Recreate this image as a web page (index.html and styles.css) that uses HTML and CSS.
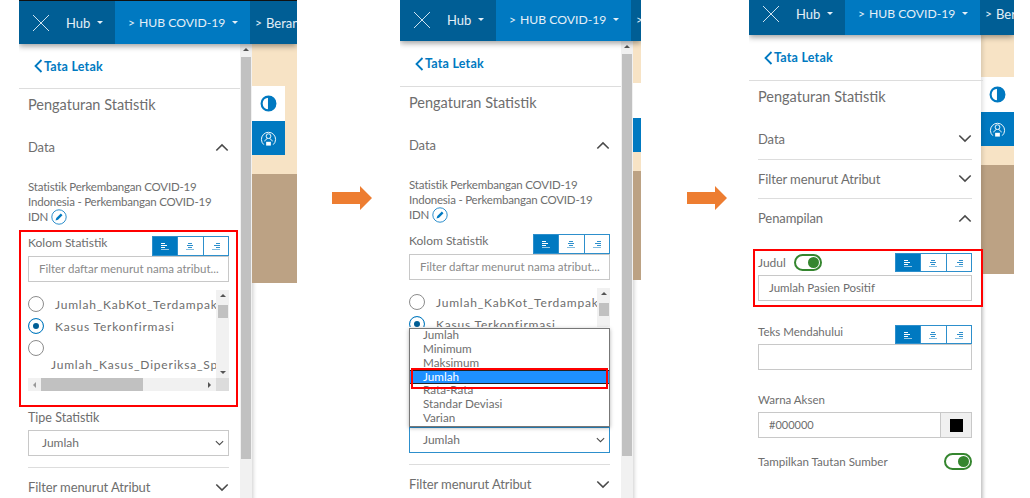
FILE: index.html
```html
<!DOCTYPE html>
<html lang="en">
<head>
  <meta charset="UTF-8">
  <title>Pengaturan Statistik</title>
  <link rel="stylesheet" href="styles.css">
</head>
<body>

<svg class="defs" width="0" height="0">
  <symbol id="logo" viewBox="0 0 18 18"><path d="M1 1 17 17M17 1 1 17" fill="none" stroke="#cfe3f0" stroke-width="1"/></symbol>
  <symbol id="up" viewBox="0 0 16 10"><path d="M1.500 8.500 8 2l6.500 6.500" fill="none" stroke="#4a4a4a" stroke-width="1.800"/></symbol>
  <symbol id="down" viewBox="0 0 16 10"><path d="M1.500 1.500 8 8l6.500-6.500" fill="none" stroke="#4a4a4a" stroke-width="1.800"/></symbol>
  <symbol id="back" viewBox="0 0 9 14"><path d="M7.500 1 1.500 7l6 6" fill="none" stroke="#0079c1" stroke-width="1.800"/></symbol>
  <symbol id="contrast" viewBox="0 0 16 16"><circle cx="8" cy="8" r="6.500" fill="#fff" stroke="#0079c1" stroke-width="2"/><path d="M8 1.500a6.500 6.500 0 0 1 0 13z" fill="#0079c1" stroke="#0079c1"/></symbol>
  <symbol id="user" viewBox="0 0 18 18"><path d="M4 15.500a7.500 7.500 0 1 1 10 0" fill="none" stroke="#fff"/><circle cx="9" cy="6.500" r="2.500" fill="none" stroke="#fff"/><path d="M5 12c.500-2 2-2.500 3-3M13 12c-.500-2-2-2.500-3-3" fill="none" stroke="#fff"/><rect x="6.500" y="12.500" width="5" height="4" fill="#fff"/></symbol>
  <symbol id="pen" viewBox="0 0 16 16"><circle cx="8" cy="8" r="7.200" fill="#fff" stroke="#2d8fcc"/><path d="M4.500 11.500l.8-2.400 4.500-4.500 1.700 1.700-4.500 4.500z" fill="#0079c1"/></symbol>
  <symbol id="al" viewBox="0 0 10 8"><path d="M1 1.500h4M1 3.500h6M1 5.500h4" stroke="currentColor" fill="none"/><path d="M1 7.500h8" stroke="currentColor" opacity=".6" fill="none"/></symbol>
  <symbol id="ac" viewBox="0 0 10 8"><path d="M3 1.500h4M2 3.500h6M3 5.500h4" stroke="currentColor" fill="none"/><path d="M1 7.500h8" stroke="currentColor" opacity=".6" fill="none"/></symbol>
  <symbol id="ar" viewBox="0 0 10 8"><path d="M5 1.500h4M3 3.500h6M5 5.500h4" stroke="currentColor" fill="none"/><path d="M1 7.500h8" stroke="currentColor" opacity=".6" fill="none"/></symbol>
  <symbol id="arrow" viewBox="0 0 40 24"><path d="M0 6h28V0l12 12-12 12v-6H0z" fill="#ed7d31"/></symbol>
</svg>

<div class="page">

  <!-- layar 1 -->
  <div class="screen screen-one">
    <div class="topbar">
      <div class="crumb crumb-home"><svg class="logo"><use href="#logo"/></svg><span>Hub</span><i class="caret"></i></div>
      <div class="crumb crumb-site"><span class="sep">&gt;</span><span>HUB COVID-19</span><i class="caret"></i></div>
      <div class="crumb crumb-page"><span class="sep">&gt;</span><span>Beranda</span></div>
    </div>
    <div class="body">
      <div class="panel">
        <a class="back"><svg><use href="#back"/></svg>Tata Letak</a>
        <h2 class="title">Pengaturan Statistik</h2>
        <div class="acc-row"><span>Data</span><svg><use href="#up"/></svg></div>
        <p class="desc">Statistik Perkembangan COVID-19 Indonesia - Perkembangan COVID-19 IDN <svg class="pen"><use href="#pen"/></svg></p>
        <div class="box box-red">
          <div class="label-row"><span>Kolom Statistik</span>
            <div class="seg"><b class="on"><svg><use href="#al"/></svg></b><b><svg><use href="#ac"/></svg></b><b><svg><use href="#ar"/></svg></b></div>
          </div>
          <div class="input placeholder">Filter daftar menurut nama atribut...</div>
          <div class="radios">
            <div class="radio-list">
              <div class="radio-row"><i class="radio"></i><span>Jumlah_KabKot_Terdampak</span></div>
              <div class="radio-row"><i class="radio checked"></i><span>Kasus Terkonfirmasi</span></div>
              <div class="radio-row radio-wrap"><i class="radio"></i><span>Jumlah_Kasus_Diperiksa_Spesimen</span></div>
            </div>
            <div class="vbar"><i class="tri-up"></i><u></u><i class="tri-down"></i></div>
            <div class="hbar"><i class="tri-left"></i><u></u><i class="tri-right"></i></div>
            <div class="corner"></div>
          </div>
        </div>
        <div class="type-label">Tipe Statistik</div>
        <div class="input select"><span>Jumlah</span><svg><use href="#down"/></svg></div>
        <div class="acc-row acc-line"><span>Filter menurut Atribut</span><svg><use href="#down"/></svg></div>
      </div>
      <div class="scrollbar"><i class="tri-up"></i><u></u></div>
      <div class="map">
        <div class="land">
          <div class="tool tool-on"><svg><use href="#contrast"/></svg></div>
          <div class="tool"><svg><use href="#user"/></svg></div>
        </div>
        <div class="ground"></div>
      </div>
    </div>
  </div>

  <svg class="arrow arrow-one"><use href="#arrow"/></svg>

  <!-- layar 2 -->
  <div class="screen screen-two">
    <div class="topbar">
      <div class="crumb crumb-home"><svg class="logo"><use href="#logo"/></svg><span>Hub</span><i class="caret"></i></div>
      <div class="crumb crumb-site"><span class="sep">&gt;</span><span>HUB COVID-19</span><i class="caret"></i></div>
      <div class="crumb crumb-page"><span class="sep">&gt;</span><span>Beranda</span></div>
    </div>
    <div class="body">
      <div class="panel">
        <a class="back"><svg><use href="#back"/></svg>Tata Letak</a>
        <h2 class="title">Pengaturan Statistik</h2>
        <div class="acc-row"><span>Data</span><svg><use href="#up"/></svg></div>
        <p class="desc">Statistik Perkembangan COVID-19 Indonesia - Perkembangan COVID-19 IDN <svg class="pen"><use href="#pen"/></svg></p>
        <div class="box">
          <div class="label-row"><span>Kolom Statistik</span>
            <div class="seg"><b class="on"><svg><use href="#al"/></svg></b><b><svg><use href="#ac"/></svg></b><b><svg><use href="#ar"/></svg></b></div>
          </div>
          <div class="input placeholder">Filter daftar menurut nama atribut...</div>
          <div class="radios radios-short">
            <div class="radio-list">
              <div class="radio-row"><i class="radio"></i><span>Jumlah_KabKot_Terdampak</span></div>
              <div class="radio-row"><i class="radio checked"></i><span>Kasus Terkonfirmasi</span></div>
            </div>
            <div class="vbar"><i class="tri-up"></i><u></u></div>
          </div>
        </div>
        <div class="select-wrap">
          <ul class="dropdown">
            <li>Jumlah</li>
            <li>Minimum</li>
            <li>Maksimum</li>
            <li class="picked">Jumlah</li>
            <li>Rata-Rata</li>
            <li>Standar Deviasi</li>
            <li>Varian</li>
          </ul>
          <div class="input select select-focus"><span>Jumlah</span><svg><use href="#down"/></svg></div>
        </div>
        <div class="acc-row acc-line"><span>Filter menurut Atribut</span><svg><use href="#down"/></svg></div>
      </div>
      <div class="scrollbar"><i class="tri-up"></i><u></u></div>
      <div class="map">
        <div class="land">
          <div class="tool tool-on"><svg><use href="#contrast"/></svg></div>
          <div class="tool"><svg><use href="#user"/></svg></div>
        </div>
        <div class="ground"></div>
      </div>
    </div>
  </div>

  <svg class="arrow arrow-two"><use href="#arrow"/></svg>

  <!-- layar 3 -->
  <div class="screen screen-three">
    <div class="topbar">
      <div class="crumb crumb-home"><svg class="logo"><use href="#logo"/></svg><span>Hub</span><i class="caret"></i></div>
      <div class="crumb crumb-site"><span class="sep">&gt;</span><span>HUB COVID-19</span><i class="caret"></i></div>
      <div class="crumb crumb-page"><span class="sep">&gt;</span><span>Beranda</span></div>
    </div>
    <div class="body">
      <div class="panel panel-wide">
        <a class="back"><svg><use href="#back"/></svg>Tata Letak</a>
        <h2 class="title">Pengaturan Statistik</h2>
        <div class="acc-row acc-first"><span>Data</span><svg><use href="#down"/></svg></div>
        <div class="acc-row acc-line-bottom"><span>Filter menurut Atribut</span><svg><use href="#down"/></svg></div>
        <div class="acc-row"><span>Penampilan</span><svg><use href="#up"/></svg></div>
        <div class="box-title">
          <div class="label-row label-tall"><span>Judul</span><i class="toggle toggle-title"></i>
            <div class="seg"><b class="on"><svg><use href="#al"/></svg></b><b><svg><use href="#ac"/></svg></b><b><svg><use href="#ar"/></svg></b></div>
          </div>
          <div class="input value">Jumlah Pasien Positif</div>
        </div>
        <div class="label-row label-lead"><span>Teks Mendahului</span>
          <div class="seg"><b class="on"><svg><use href="#al"/></svg></b><b><svg><use href="#ac"/></svg></b><b><svg><use href="#ar"/></svg></b></div>
        </div>
        <div class="input"></div>
        <div class="accent-label">Warna Aksen</div>
        <div class="color-row">
          <div class="input value color-value">#000000</div>
          <div class="swatch"><i></i></div>
        </div>
        <div class="switch-row"><span>Tampilkan Tautan Sumber</span><i class="toggle"></i></div>
      </div>
      <div class="map">
        <div class="land">
          <div class="tool tool-on"><svg><use href="#contrast"/></svg></div>
          <div class="tool"><svg><use href="#user"/></svg></div>
        </div>
        <div class="ground"></div>
      </div>
    </div>
  </div>

</div>

</body>
</html>
```

FILE: styles.css
```css
* {
  box-sizing: border-box;
}

html, body {
  height: 100%;
  margin: 0;
  overflow: hidden;
  background: #fff;
}

body {
  font-family: Lato, "Open Sans", sans-serif;
  font-size: 13px;
  color: #6e6e6e;
}

.defs {
  position: absolute;
}

.page {
  display: flex;
  align-items: flex-start;
  width: 1030px;
  height: 498px;
  padding-left: 19px;
  overflow: hidden;
}

/* one screen of the editor */
.screen {
  display: flex;
  flex-direction: column;
  flex: none;
  height: 520px;
  overflow: hidden;
}

.screen-one {
  width: 278px;
  border-top: 1px solid #111;
}

.screen-two {
  width: 241px;
  margin-top: -2px;
}

.screen-three {
  width: 265px;
  margin-top: -8px;
}

.arrow {
  flex: none;
  width: 40px;
  height: 24px;
  margin-top: 186px;
}

.arrow-one {
  margin-left: 35px;
  margin-right: 28px;
}

.arrow-two {
  margin-left: 46px;
  margin-right: 22px;
}

/* top bar */
.topbar {
  display: flex;
  flex: none;
  height: 43px;
  position: relative;
  z-index: 2;
  color: #e4eff7;
  font-size: 13px;
  white-space: nowrap;
  box-shadow: 0 2px 6px rgba(0, 0, 0, 0.4);
}

.crumb {
  display: flex;
  align-items: center;
  flex: none;
}

.crumb-home {
  width: 96px;
  padding-left: 13px;
  background: #005e95;
}

.crumb-site {
  width: 135px;
  padding-left: 13px;
  background: #0079c1;
  font-size: 12.200px;
}

.crumb-page {
  flex: 1;
  min-width: 0;
  padding-left: 5px;
  background: #005e95;
  overflow: hidden;
}

.logo {
  width: 18px;
  height: 18px;
  margin-right: 16px;
}

.sep {
  flex: none;
  width: 11px;
  font-size: 12px;
}

.caret {
  width: 0;
  height: 0;
  margin-left: 7px;
  border-top: 3px solid #e4eff7;
  border-left: 3px solid transparent;
  border-right: 3px solid transparent;
}

.body {
  display: flex;
  flex: 1;
}

/* left panel */
.panel {
  flex: none;
  width: 221px;
  padding: 0 11px 0 9px;
  position: relative;
  z-index: 1;
}

.panel-wide {
  width: 232px;
  padding-right: 9px;
  box-shadow: 2px 0 4px rgba(0, 0, 0, 0.12);
}

.back {
  display: flex;
  align-items: center;
  height: 45px;
  margin: 0 -11px 0 -9px;
  padding-left: 15px;
  border-bottom: 1px solid #ddd;
  color: #0079c1;
  font-size: 12.500px;
  font-weight: 700;
  letter-spacing: 0.2px;
}

.back svg {
  width: 9px;
  height: 14px;
  margin-right: 1px;
}

.screen-two .back, .screen-three .back {
  height: 46px;
}

.title {
  height: 39px;
  margin: 0;
  padding-top: 7px;
  font-size: 14.500px;
  font-weight: 400;
  line-height: 18px;
}

.screen-three .title {
  height: 38px;
}

.acc-row {
  display: flex;
  justify-content: space-between;
  align-items: center;
  height: 39px;
  padding-bottom: 1px;
  letter-spacing: -0.1px;
}

.acc-row svg {
  width: 14px;
  height: 9px;
}

.acc-first {
  height: 41px;
  border-bottom: 1px solid #ddd;
}

.acc-line {
  border-top: 1px solid #ddd;
  height: 40px;
}

.acc-line-bottom {
  border-bottom: 1px solid #ddd;
}

.desc {
  height: 45px;
  margin: 12px 0 0;
  font-size: 11.500px;
  line-height: 15px;
  letter-spacing: -0.2px;
}

.pen {
  width: 16px;
  height: 16px;
  vertical-align: -4px;
}

/* field group, red in the first screen */
.box {
  margin: 6px -9px 0;
  padding: 4px 7px 14px;
  border: 2px solid transparent;
}

.box-red {
  border-color: #f00;
}

.label-row {
  display: flex;
  justify-content: space-between;
  align-items: flex-start;
  height: 20px;
  font-size: 12px;
  line-height: 13px;
}

.seg {
  display: flex;
  width: 77px;
  height: 20px;
  border: 1px solid #2d8fcc;
}

.seg b {
  display: flex;
  align-items: center;
  justify-content: center;
  flex: 1;
  color: #2d8fcc;
  border-left: 1px solid #2d8fcc;
}

.seg b.on {
  color: #fff;
  background: #0079c1;
  border-left: 0;
}

.seg svg {
  width: 10px;
  height: 8px;
}

.input {
  height: 26px;
  padding-left: 10px;
  background: #fff;
  border: 1px solid #c8c8c8;
  font-size: 12px;
  line-height: 24px;
}

.placeholder {
  font-size: 11.500px;
  white-space: nowrap;
  color: #8a8a8a;
}

/* radio list with its scrollbars */
.radios {
  display: grid;
  grid-template-columns: 188px 13px;
  grid-template-rows: 88px 13px;
  margin-top: 8px;
}

/* in the second screen the open list hides the lower part */
.radios-short {
  grid-template-rows: 39px;
  margin-bottom: 61px;
}

.radio-list {
  overflow: hidden;
  font-size: 12px;
  letter-spacing: 0.8px;
  white-space: nowrap;
}

.radio-row {
  display: flex;
  align-items: center;
  height: 22px;
  margin-top: 3px;
}

.radio-row + .radio-row {
  margin-top: 0;
}

.radio-row span {
  margin-left: 11px;
}

.radio-wrap {
  display: block;
  height: auto;
  padding-top: 3px;
}

.radio-wrap span {
  display: block;
  margin: 1px 0 0 23px;
}

.radio {
  display: block;
  flex: none;
  width: 16px;
  height: 16px;
  border: 1px solid #8c8c8c;
  border-radius: 50%;
  background: #fff;
}

.radio.checked {
  border-color: #0079c1;
  box-shadow: inset 0 0 0 4px #fff, inset 0 0 0 8px #005e95;
}

.vbar, .hbar {
  display: flex;
  background: #f1f1f1;
}

.vbar {
  flex-direction: column;
  align-items: center;
}

.hbar {
  align-items: center;
}

.vbar u {
  width: 10px;
  height: 13px;
  margin: 8px 0 auto;
  background: #c1c1c1;
}

.hbar u {
  width: 102px;
  height: 13px;
  margin: 0 auto 0 5px;
  background: #c1c1c1;
}

.corner {
  background: #dcdcdc;
}

.tri-up, .tri-down, .tri-left, .tri-right {
  flex: none;
  width: 0;
  height: 0;
  border: 3px solid transparent;
}

.tri-up {
  margin-top: 4px;
  border-top: 0;
  border-bottom-color: #555;
}

.tri-down {
  margin-bottom: 4px;
  border-bottom: 0;
  border-top-color: #555;
}

.tri-left {
  margin-left: 5px;
  border-left: 0;
  border-right-color: #999;
}

.tri-right {
  margin-right: 5px;
  border-right: 0;
  border-left-color: #555;
}

.type-label {
  height: 23px;
  font-size: 12.500px;
  line-height: 22px;
}

.select {
  display: flex;
  justify-content: space-between;
  align-items: center;
  padding-left: 13px;
  padding-right: 4px;
  margin-bottom: 11px;
}

.select svg {
  width: 9px;
  height: 6px;
}

.select-focus {
  border-color: #2d8fcc;
}

/* the open list covers the rows above the select */
.select-wrap {
  position: relative;
  margin-top: 23px;
}

.dropdown {
  position: absolute;
  left: 0;
  right: 0;
  bottom: 26px;
  z-index: 3;
  margin: 0;
  padding: 0;
  list-style: none;
  background: #fff;
  border: 1px solid #777;
  box-shadow: 0 1px 4px rgba(0, 0, 0, 0.3);
}

.dropdown li {
  height: 13.900px;
  padding-left: 13px;
  font-size: 11.700px;
  line-height: 11px;
}

.dropdown .picked {
  position: relative;
  color: #fff;
  background: #1e90ff;
  border-top: 1px solid #222;
  border-bottom: 1px solid #222;
  line-height: 11px;
}

.dropdown .picked::after {
  content: "";
  position: absolute;
  left: 1px;
  right: 1px;
  top: -3px;
  bottom: -6px;
  border: 2px solid #f00;
}

/* third screen, appearance section */
.box-title {
  margin: 11px -11px 0 -5px;
  padding: 2px 9px 4px 3px;
  border: 2px solid #f00;
}

.label-tall {
  justify-content: flex-start;
  height: 22px;
}

.label-tall span {
  margin-top: 3px;
}

.label-tall .seg {
  margin-left: auto;
  height: 19px;
}

.label-lead {
  margin-top: 18px;
  height: 19px;
  font-size: 11.500px;
}

.label-lead span {
  margin-top: -1px;
  line-height: 15px;
}

.label-lead .seg {
  height: 19px;
}

.value {
  padding-left: 10px;
  font-size: 11.500px;
}

.toggle {
  display: block;
  flex: none;
  position: relative;
  width: 28px;
  height: 17px;
  border: 2px solid #35862f;
  border-radius: 9px;
  background: #fff;
}

.toggle::after {
  content: "";
  position: absolute;
  top: 1px;
  right: 1px;
  width: 11px;
  height: 11px;
  border-radius: 50%;
  background: #35862f;
}

.toggle-title {
  margin-left: 8px;
  margin-top: 1px;
}

.accent-label {
  height: 22px;
  margin-top: 20px;
  font-size: 11.500px;
  line-height: 20px;
}

.color-row {
  display: flex;
}

.color-value {
  flex: 1;
  border-right: 0;
  font-size: 11px;
}

.swatch {
  display: flex;
  align-items: center;
  justify-content: center;
  width: 32px;
  height: 26px;
  background: #f0f0f0;
  border: 1px solid #c8c8c8;
}

.swatch i {
  width: 13px;
  height: 13px;
  background: #000;
}

.switch-row {
  display: flex;
  justify-content: space-between;
  align-items: center;
  height: 20px;
  margin-top: 14px;
  padding-bottom: 1px;
  font-size: 11.600px;
}

/* page scrollbar next to the panel */
.scrollbar {
  display: flex;
  flex-direction: column;
  align-items: center;
  flex: none;
  width: 12px;
  background: #f1f1f1;
}

.scrollbar u {
  width: 10px;
  height: 402px;
  margin-top: 6px;
  background: #c1c1c1;
}

/* map behind the panel */
.map {
  flex: 1;
  min-width: 0;
  box-shadow: inset 3px 0 4px -2px rgba(0, 0, 0, 0.2);
}

.land {
  height: 130px;
  padding-top: 42px;
  background: #f7e3c5;
}

.ground {
  height: 109px;
  background: #bca284;
}

.tool {
  display: flex;
  align-items: center;
  justify-content: center;
  width: 33px;
  height: 34px;
  background: #0079c1;
}

.tool svg {
  width: 17px;
  height: 17px;
}

.tool-on {
  height: 35px;
  background: #fff;
}
```
